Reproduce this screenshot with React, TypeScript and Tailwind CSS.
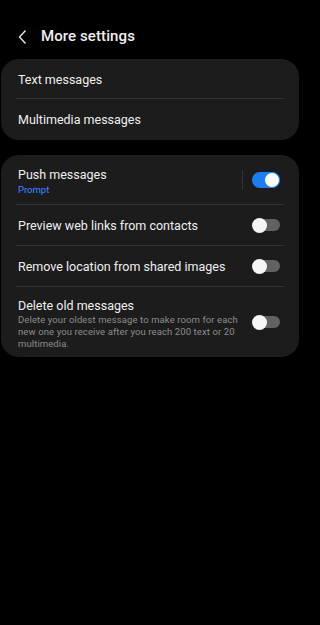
import React from "react";

function Toggle({ on }: { on: boolean }) {
  return on ? (
    <div className="relative w-[28px] h-[16px] shrink-0">
      <div className="absolute inset-0 rounded-full bg-[#1b7cf3]" />
      <div className="absolute right-0 top-0 w-[16px] h-[16px] rounded-full bg-white border-[1.5px] border-[#1b7cf3]" />
    </div>
  ) : (
    <div className="relative w-[28px] h-[16px] shrink-0">
      <div className="absolute left-[4px] right-0 top-[2px] bottom-[2px] rounded-full bg-[#626262]" />
      <div className="absolute left-0 top-[0.5px] w-[15px] h-[15px] rounded-full bg-[#f5f5f5]" />
    </div>
  );
}

export default function App() {
  return (
    <div
      className="w-full min-h-screen bg-black text-[#efefef] overflow-hidden"
      style={{ fontFamily: "Roboto, 'Noto Sans', sans-serif" }}
    >
      <div className="w-[300px] h-[625px]">
        <div className="flex items-center h-[59px] pt-[14px] pl-[17px]">
          <svg width="12" height="16" viewBox="0 0 12 16" className="mr-[12px]">
            <path d="M8.5 1.5 L2.5 8 L8.5 14.5" fill="none" stroke="#e8e8e8" strokeWidth="1.4" />
          </svg>
          <span className="text-[15px] font-medium tracking-[0.1px]">More settings</span>
        </div>

        <div className="mx-[1px] rounded-[18px] bg-[#1c1c1c]">
          <div className="h-[40px] flex items-center mx-[15px] pl-[2px] border-b border-[#333333] text-[12.5px] pt-[3px]">
            Text messages
          </div>
          <div className="h-[41px] flex items-center mx-[15px] pl-[2px] text-[12.5px] pt-[2px]">
            Multimedia messages
          </div>
        </div>

        <div className="mt-[15px] mx-[1px] rounded-[18px] bg-[#1c1c1c]">
          <div className="h-[50px] flex items-center mx-[15px] pl-[2px] border-b border-[#333333]">
            <div className="flex-1 flex flex-col pt-[2px]">
              <span className="text-[12.5px] leading-[17px]">Push messages</span>
              <span className="text-[9.5px] leading-[13px] text-[#3d8ef5]">Prompt</span>
            </div>
            <div className="w-px h-[20px] bg-[#3a3232] mr-[9px]" />
            <div className="mr-[4px]">
              <Toggle on />
            </div>
          </div>
          <div className="h-[41px] flex items-center mx-[15px] pl-[2px] border-b border-[#333333]">
            <span className="flex-1 text-[12.5px] pt-[2px]">Preview web links from contacts</span>
            <div className="mr-[4px]">
              <Toggle on={false} />
            </div>
          </div>
          <div className="h-[41px] flex items-center mx-[15px] pl-[2px] border-b border-[#333333]">
            <span className="flex-1 text-[12.5px] pt-[2px]">Remove location from shared images</span>
            <div className="mr-[4px]">
              <Toggle on={false} />
            </div>
          </div>
          <div className="h-[70px] flex items-start mx-[15px] pl-[2px] pt-[10px]">
            <div className="flex-1 flex flex-col pr-[14px]">
              <span className="text-[12.5px] leading-[17px]">Delete old messages</span>
              <span className="text-[9.5px] leading-[12px] text-[#8d8d8d] tracking-[0.1px]">
                Delete your oldest message to make room for each new one you receive after you reach 200 text or 20 multimedia.
              </span>
            </div>
            <div className="mr-[4px] mt-[17px]">
              <Toggle on={false} />
            </div>
          </div>
        </div>
      </div>
    </div>
  );
}
